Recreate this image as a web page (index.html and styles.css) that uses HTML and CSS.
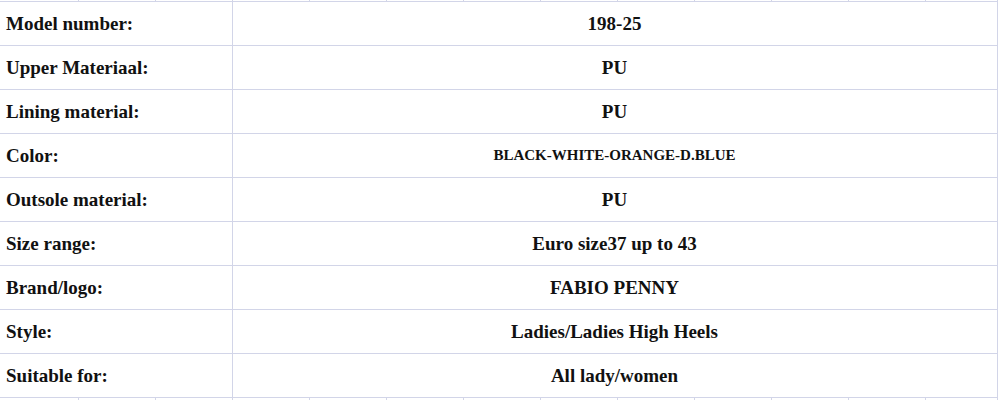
FILE: index.html
```html
<!DOCTYPE html>
<html>
<head>
<meta charset="utf-8">
<link rel="stylesheet" href="styles.css">
</head>
<body>
<table class="sheet">
  <colgroup>
    <col class="c1"><col class="c"><col class="c"><col class="c"><col class="c"><col class="c"><col class="c"><col class="c"><col class="c"><col class="c"><col class="c"><col class="c"><col class="clast">
  </colgroup>
  <tr class="edge top">
    <td></td><td></td><td></td><td></td><td></td><td></td><td></td><td></td><td></td><td></td><td></td><td></td><td></td>
  </tr>
  <tr class="row"><td class="label" colspan="3">Model number:</td><td class="value" colspan="10">198-25</td></tr>
  <tr class="row"><td class="label" colspan="3">Upper Materiaal:</td><td class="value" colspan="10">PU</td></tr>
  <tr class="row"><td class="label" colspan="3">Lining material:</td><td class="value" colspan="10">PU</td></tr>
  <tr class="row"><td class="label" colspan="3">Color:</td><td class="value small" colspan="10">BLACK-WHITE-ORANGE-D.BLUE</td></tr>
  <tr class="row"><td class="label" colspan="3">Outsole material:</td><td class="value" colspan="10">PU</td></tr>
  <tr class="row"><td class="label" colspan="3">Size range:</td><td class="value" colspan="10">Euro size37 up to 43</td></tr>
  <tr class="row"><td class="label" colspan="3">Brand/logo:</td><td class="value" colspan="10">FABIO PENNY</td></tr>
  <tr class="row"><td class="label" colspan="3">Style:</td><td class="value" colspan="10">Ladies/Ladies High Heels</td></tr>
  <tr class="row"><td class="label" colspan="3">Suitable for:</td><td class="value" colspan="10">All lady/women</td></tr>
  <tr class="edge bottom">
    <td></td><td></td><td></td><td></td><td></td><td></td><td></td><td></td><td></td><td></td><td></td><td></td><td></td>
  </tr>
</table>
</body>
</html>
```
FILE: styles.css
```css
html, body {
  margin: 0;
  padding: 0;
  background: #ffffff;
}

.sheet {
  border-collapse: collapse;
  table-layout: fixed;
  width: 997px;
  font-family: "Liberation Serif", "Times New Roman", serif;
  font-weight: bold;
  color: #111111;
}

.c1 { width: 78px; }
.c { width: 77px; }
.clast { width: 72px; }

.sheet td {
  border: 1px solid #d2d5e8;
  padding: 0;
}

.sheet td:first-child {
  border-left: none;
}

.edge td {
  height: 1px;
  font-size: 0;
  line-height: 0;
}

.top td {
  border-top: none;
}

.bottom td {
  border-bottom: none;
  height: 4px;
}

.row td {
  height: 43px;
  vertical-align: middle;
}

.label {
  font-size: 19px;
  text-align: left;
  padding-left: 6px !important;
  white-space: nowrap;
}

.value {
  font-size: 19px;
  text-align: center;
  white-space: nowrap;
}

.value.small {
  font-size: 15px;
}
```
